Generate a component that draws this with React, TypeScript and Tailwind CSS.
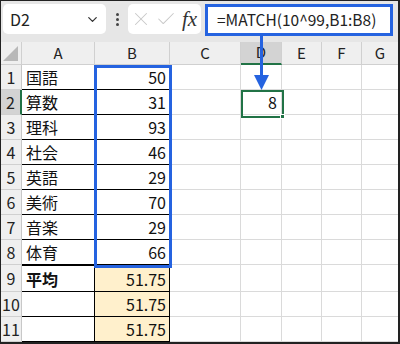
import { ChevronDown, X, Check } from "lucide-react";

const cols = ["A", "B", "C", "D", "E", "F", "G"];

type Row = { n: number; a: string; b: string; avg?: boolean; bold?: boolean };

const rows: Row[] = [
  { n: 1, a: "国語", b: "50" },
  { n: 2, a: "算数", b: "31" },
  { n: 3, a: "理科", b: "93" },
  { n: 4, a: "社会", b: "46" },
  { n: 5, a: "英語", b: "29" },
  { n: 6, a: "美術", b: "70" },
  { n: 7, a: "音楽", b: "29" },
  { n: 8, a: "体育", b: "66" },
  { n: 9, a: "平均", b: "51.75", avg: true, bold: true },
  { n: 10, a: "", b: "51.75", avg: true },
  { n: 11, a: "", b: "51.75", avg: true },
];

const font = { fontFamily: '"Noto Sans CJK JP", "Noto Sans", sans-serif' };

function Header() {
  return (
    <div className="flex h-[23px] bg-[#efefef] text-[15px] text-[#222]">
      <div className="relative w-[21px] shrink-0 border-r border-b border-[#d0d0d0]">
        <svg className="absolute right-[3px] bottom-[3px]" width="15" height="15">
          <polygon points="15,0 15,15 0,15" fill="#b8b8b8" />
        </svg>
      </div>
      {cols.map((c) => (
        <div
          key={c}
          className={`flex shrink-0 items-center justify-center border-r border-[#d0d0d0] ${
            c === "D" ? "border-b-2 border-b-[#217346] bg-[#d3d3d3]" : "border-b border-b-[#d0d0d0]"
          } ${c === "A" ? "w-[73px]" : c === "B" ? "w-[75px]" : c === "C" ? "w-[71px]" : c === "D" ? "w-[41px]" : c === "G" ? "w-[37px]" : "w-[40px]"}`}
        >
          {c}
        </div>
      ))}
    </div>
  );
}

export default function App() {
  return (
    <div className="relative h-[344px] w-[400px] overflow-hidden border-t border-l border-r-2 border-b-2 border-[#222] bg-white" style={font}>
      {/* toolbar */}
      <div className="flex h-[41px] items-start bg-[#e6e6e6] pt-[3px]">
        <div className="ml-[2px] flex h-[30px] w-[103px] items-center justify-between rounded-[5px] bg-white pl-[7px] pr-[6px] text-[16px] text-[#222]">
          <span>D2</span>
          <ChevronDown size={15} strokeWidth={2} className="text-[#333]" />
        </div>
        <div className="flex h-[30px] w-[22px] flex-col items-center justify-center gap-[2px]">
          <span className="h-[3px] w-[3px] rounded-full bg-[#444]" />
          <span className="h-[3px] w-[3px] rounded-full bg-[#444]" />
          <span className="h-[3px] w-[3px] rounded-full bg-[#444]" />
        </div>
        <div className="flex h-[30px] w-[73px] items-center rounded-[5px] bg-white pl-[2px]">
          <X size={22} strokeWidth={1.1} className="text-[#c8c8c8]" />
          <Check size={22} strokeWidth={1.1} className="ml-[3px] text-[#c8c8c8]" />
          <span className="ml-[5px] text-[21px] italic leading-none text-[#333]" style={{ fontFamily: '"Liberation Serif", serif' }}>
            fx
          </span>
        </div>
        <div className="ml-[4px] flex h-[32px] w-[188px] items-center border-[3px] border-[#2563e0] bg-white pl-[9px] text-[15.5px] text-[#222]">
          =MATCH(10^99,B1:B8)
        </div>
      </div>

      <Header />

      {rows.map((r) => (
        <div key={r.n} className={`flex ${r.n === 9 ? "h-[27px]" : "h-[25px]"}`}>
          <div
            className={`flex w-[21px] shrink-0 items-center justify-center overflow-visible border-b border-[#d0d0d0] text-[16px] text-[#222] ${
              r.n === 2 ? "border-r-2 border-r-[#217346] bg-[#d3d3d3]" : "border-r border-r-[#c8c8c8] bg-[#efefef]"
            }`}
          >
            <span className="whitespace-nowrap">{r.n}</span>
          </div>
          <div
            className={`flex w-[73px] shrink-0 items-center border-r border-b border-black pl-[4px] text-[16px] text-[#111] ${
              r.bold ? "font-bold" : ""
            } ${r.n === 9 ? "border-t-[1px]" : ""}`}
          >
            {r.a}
          </div>
          <div
            className={`flex w-[75px] shrink-0 items-center justify-end border-r border-b border-black pr-[3px] text-[16px] text-[#111] ${
              r.avg ? "bg-[#fff0cc]" : ""
            } ${r.n === 9 ? "border-t-[1px]" : ""}`}
          >
            {r.b}
          </div>
          <div className="w-[71px] shrink-0 border-r border-b border-[#dadada]" />
          <div className="flex w-[41px] shrink-0 items-center justify-end border-r border-b border-[#dadada] pr-[4px] text-[16px] text-[#111]">
            {r.n === 2 ? "8" : ""}
          </div>
          <div className="w-[40px] shrink-0 border-r border-b border-[#dadada]" />
          <div className="w-[40px] shrink-0 border-r border-b border-[#dadada]" />
          <div className="w-[37px] shrink-0 border-b border-[#dadada]" />
        </div>
      ))}

      {/* range highlight B1:B8 */}
      <div className="pointer-events-none absolute left-[93px] top-[64px] h-[203px] w-[78px] border-[3px] border-[#2563e0]" />

      {/* D2 selection */}
      <div className="pointer-events-none absolute left-[240px] top-[89px] h-[28px] w-[43px] border-2 border-[#217346]" />
      <div className="pointer-events-none absolute left-[279px] top-[113px] h-[5px] w-[5px] border border-white bg-[#217346]" />

      {/* arrow */}
      <svg className="pointer-events-none absolute left-[250px] top-[33px]" width="22" height="60">
        <line x1="10.5" y1="0" x2="10.5" y2="44" stroke="#2563e0" strokeWidth="3" />
        <polygon points="3,41 18,41 10.5,56" fill="#2563e0" />
      </svg>
    </div>
  );
}
